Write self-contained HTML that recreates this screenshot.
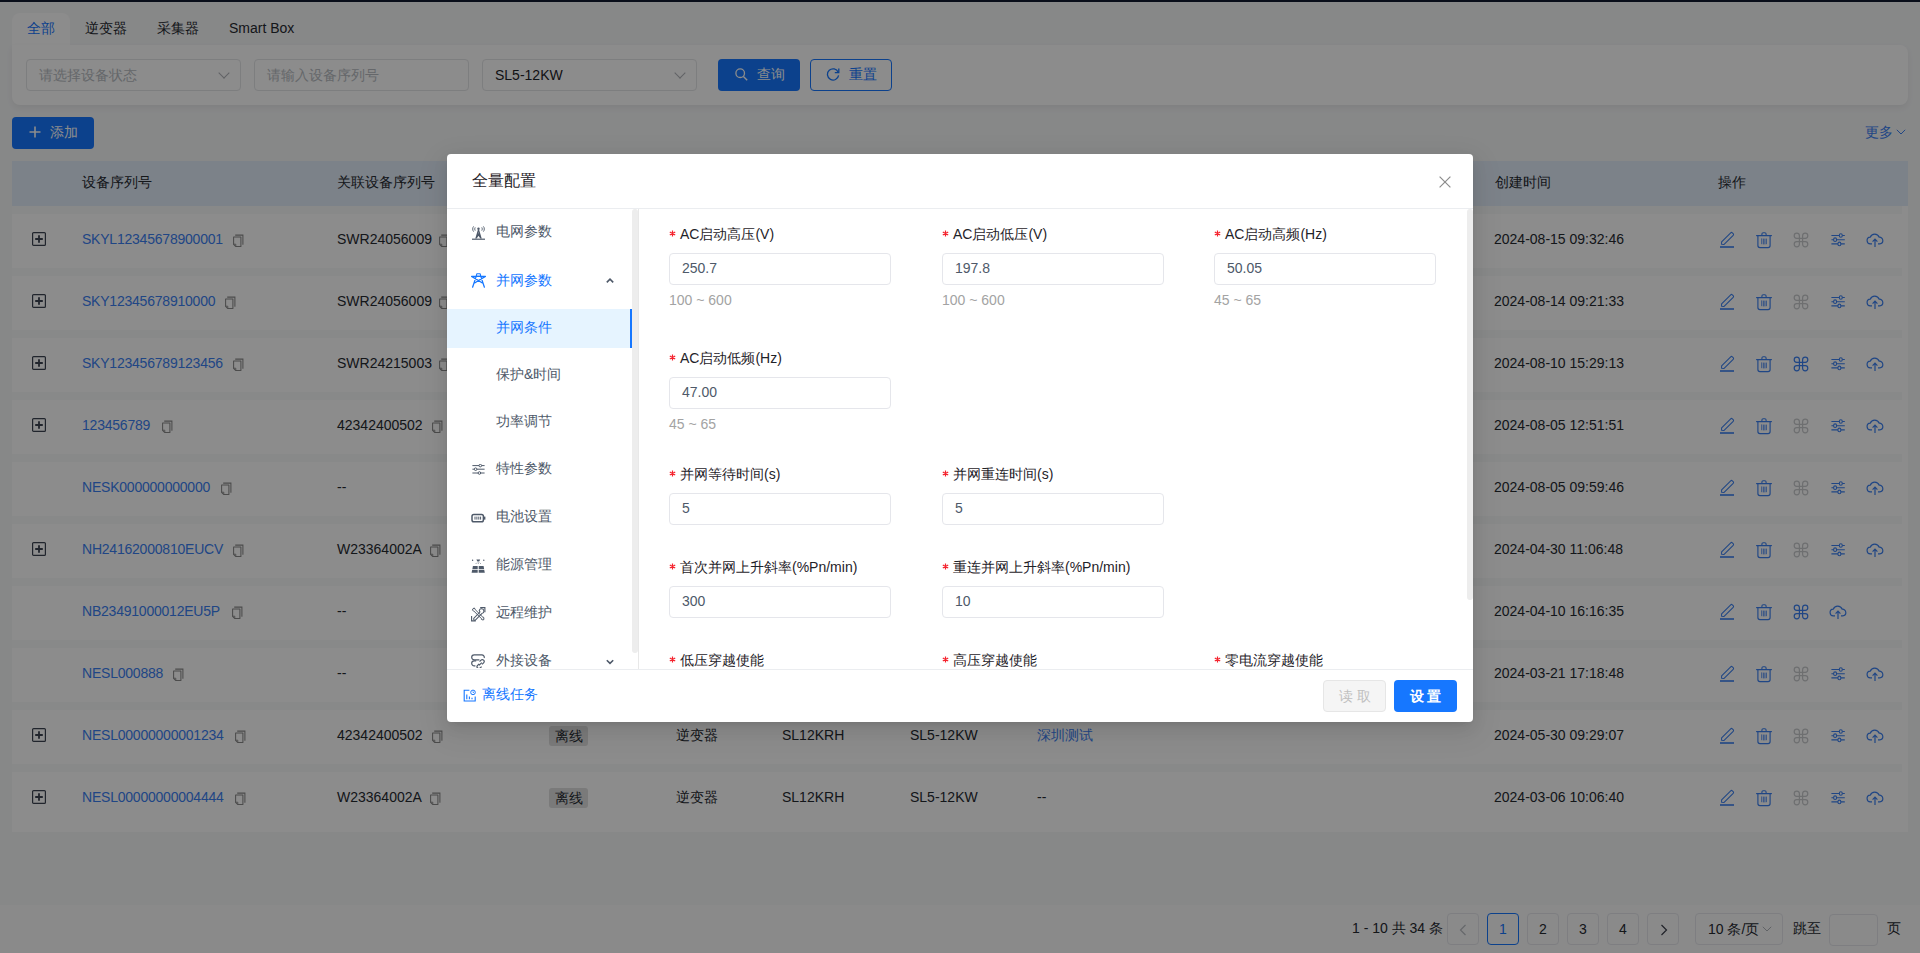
<!DOCTYPE html>
<html><head><meta charset="utf-8">
<style>
*{box-sizing:border-box;margin:0;padding:0}
html,body{width:1920px;height:953px;overflow:hidden}
body{position:relative;font-family:"Liberation Sans",sans-serif;font-size:14px;color:#262a31;background:#f6f7f8}
.a{position:absolute}
.t{position:absolute;white-space:nowrap;line-height:20px}
.topline{left:0;top:0;width:1920px;height:2px;background:#111a30}
.tabbar{left:12px;top:2px;width:1896px;height:43px;background:#eef0f3}
.tabact{left:12px;top:13px;width:58px;height:33px;background:#fff;border-radius:8px 8px 0 0}
.fcard{left:12px;top:45px;width:1896px;height:60px;background:#fff;border-radius:0 8px 8px 8px;box-shadow:0 3px 6px rgba(0,0,0,.06)}
.inp{position:absolute;top:59px;height:32px;width:215px;border:1px solid #e3e5e8;border-radius:4px;background:#fff}
.inp .ph{position:absolute;left:12px;top:5px;line-height:20px;color:#b8bcc2;white-space:nowrap}
.chev{position:absolute;width:8px;height:8px;border-right:1px solid #b0b3b8;border-bottom:1px solid #b0b3b8;transform:rotate(45deg)}
.btnp{position:absolute;background:#1677ff;color:#fff;border-radius:4px}
.thead{left:12px;top:161px;width:1896px;height:45px;background:#e2edfa}
.tbody{left:12px;top:206px;width:1896px;height:626px;background:#fff}
.gap{position:absolute;left:12px;width:1890px;height:8px;background:#f8f9fa}
.link{color:#1677ff}
.tl{color:#3b80f2}
.sn{letter-spacing:-0.22px}
.pbar{left:0;top:905px;width:1920px;height:48px;background:#fbfbfc}
.pg{position:absolute;top:913px;width:32px;height:32px;border:1px solid #e5e6eb;border-radius:4px;background:#fbfbfc;text-align:center;line-height:30px}
.cp{display:inline-block;vertical-align:top;margin-left:11px;margin-top:4px}
.tag{height:20px;width:39px;text-align:center;line-height:20px;background:#dfdfdf;border-radius:3px;color:#2a2e35}
.modal{left:447px;top:154px;width:1026px;height:568px;background:#fff;border-radius:4px;box-shadow:0 6px 16px rgba(0,0,0,.08),0 3px 6px -4px rgba(0,0,0,.12),0 9px 28px 8px rgba(0,0,0,.05)}
.mlab{color:#1f2329}
.req{color:#f53f3f;margin-right:4px;font-family:"Liberation Sans",sans-serif}
.minp{position:absolute;width:222px;height:32px;border:1px solid #e5e6eb;border-radius:4px;padding-left:12px;line-height:28px;color:#4e5969;font-size:14px}
.mhint{color:#a3a3a3}
.mask{left:0;top:0;width:1920px;height:953px;background:rgba(0,0,0,.45)}
</style></head><body>
<div class="a topline"></div>
<div class="a tabact"></div>
<div class="t link" style="left:27px;top:18px">全部</div>
<div class="t" style="left:85px;top:18px">逆变器</div>
<div class="t" style="left:157px;top:18px">采集器</div>
<div class="t" style="left:229px;top:18px">Smart Box</div>
<div class="a fcard"></div>
<div class="inp" style="left:26px"><span class="ph">请选择设备状态</span><i class="chev" style="left:193px;top:9px"></i></div>
<div class="inp" style="left:254px"><span class="ph">请输入设备序列号</span></div>
<div class="inp" style="left:482px"><span class="ph" style="color:#1f2329">SL5-12KW</span><i class="chev" style="left:193px;top:9px"></i></div>
<div class="btnp" style="left:718px;top:59px;width:82px;height:32px"></div>
<svg class="a" style="left:735px;top:68px" width="13" height="13" viewBox="0 0 13 13" fill="none"><circle cx="5.2" cy="5.2" r="4.3" stroke="#fff" stroke-width="1.3"/><path d="M8.4 8.4 12.2 12.2" stroke="#fff" stroke-width="1.4"/></svg>
<div class="t" style="left:757px;top:64px;color:#fff">查询</div>
<div class="a" style="left:810px;top:59px;width:82px;height:32px;border:1px solid #1677ff;border-radius:4px;background:#fff"></div>
<svg class="a" style="left:826px;top:67px" width="14" height="14" viewBox="0 0 14 14" fill="none"><path d="M12.2 5.2A5.6 5.6 0 1 0 12.6 8.4" stroke="#1677ff" stroke-width="1.3"/><path d="M12.8 1.6V5.6H8.8" stroke="#1677ff" stroke-width="1.3"/></svg>
<div class="t link" style="left:849px;top:64px">重置</div>
<div class="btnp" style="left:12px;top:117px;width:82px;height:32px"></div>
<svg class="a" style="left:29px;top:126px" width="12" height="12" viewBox="0 0 12 12" fill="none"><path d="M6 0.5V11.5M0.5 6H11.5" stroke="#fff" stroke-width="1.6"/></svg>
<div class="t" style="left:50px;top:122px;color:#fff">添加</div>
<div class="t tl" style="left:1865px;top:122px">更多</div>
<svg class="a" style="left:1896px;top:129px" width="10" height="6" viewBox="0 0 10 6" fill="none"><path d="M0.8 0.8 5 5 9.2 0.8" stroke="#3b80f2" stroke-width="1"/></svg>
<div class="a thead"></div>
<div class="a tbody"></div>
<div class="t" style="left:82px;top:172px">设备序列号</div>
<div class="t" style="left:337px;top:172px">关联设备序列号</div>
<div class="t" style="left:1495px;top:172px">创建时间</div>
<div class="t" style="left:1718px;top:172px">操作</div>
<div class="gap" style="top:206px"></div>
<div class="gap" style="top:268px"></div>
<div class="gap" style="top:330px"></div>
<div class="gap" style="top:392px"></div>
<div class="gap" style="top:454px"></div>
<div class="gap" style="top:516px"></div>
<div class="gap" style="top:578px"></div>
<div class="gap" style="top:640px"></div>
<div class="gap" style="top:702px"></div>
<div class="gap" style="top:764px"></div>
<svg class="a" style="left:32px;top:232px" width="14" height="14" viewBox="0 0 14 14" fill="none"><rect x="0.6" y="0.6" width="12.8" height="12.8" rx="1" stroke="#3d4452" stroke-width="1.2"/><path d="M7 3.2V10.8M3.2 7H10.8" stroke="#3d4452" stroke-width="1.8"/></svg>
<div class="t tl sn" style="left:82px;top:229px">SKYL12345678900001</div>
<svg class="a" style="left:233px;top:234px" width="12" height="13" viewBox="0 0 12 13" fill="none"><path d="M2.2 1.1H9.9V10.8" stroke="#8a8a8a" stroke-width="1.05"/><path d="M0.6 2.9H7.9V12.4H2.6L0.6 10.4Z" stroke="#8a8a8a" stroke-width="1.05" stroke-linejoin="round"/><path d="M0.8 10.2H2.8V12.2" stroke="#8a8a8a" stroke-width="0.9"/></svg>
<div class="t rel" style="left:337px;top:229px">SWR24056009</div>
<svg class="a" style="left:439px;top:234px" width="12" height="13" viewBox="0 0 12 13" fill="none"><path d="M2.2 1.1H9.9V10.8" stroke="#8a8a8a" stroke-width="1.05"/><path d="M0.6 2.9H7.9V12.4H2.6L0.6 10.4Z" stroke="#8a8a8a" stroke-width="1.05" stroke-linejoin="round"/><path d="M0.8 10.2H2.8V12.2" stroke="#8a8a8a" stroke-width="0.9"/></svg>
<div class="t" style="left:1494px;top:229px">2024-08-15 09:32:46</div>
<svg class="a" style="left:1717px;top:230px" width="20" height="20" viewBox="0 0 20 20" fill="none"><path d="M4.6 14.3V11.9L13.7 2.8Q14.5 2 15.3 2.8L16.2 3.7Q17 4.5 16.2 5.3L7.1 14.4Z" stroke="#3b80f2" stroke-width="1.05" stroke-linejoin="round"/><path d="M3 17H17" stroke="#3b80f2" stroke-width="1.6"/></svg>
<svg class="a" style="left:1754px;top:230px" width="20" height="20" viewBox="0 0 20 20" fill="none"><path d="M2.6 5.6H17.4" stroke="#3b80f2" stroke-width="1.3" stroke-linecap="round"/><path d="M7.9 5.3V4.1Q7.9 2.8 9.2 2.8H10.8Q12.1 2.8 12.1 4.1V5.3" stroke="#3b80f2" stroke-width="1.1"/><path d="M3.9 6V15.6Q3.9 17.6 5.9 17.6H14.1Q16.1 17.6 16.1 15.6V6" stroke="#3b80f2" stroke-width="1.15"/><path d="M7.7 8.4V14.2M9.4 8.6V14.4M10.9 8.6V14.4M12.4 8.6V14.2" stroke="#3b80f2" stroke-width="0.8"/></svg>
<svg class="a" style="left:1791px;top:230px" width="20" height="20" viewBox="0 0 20 20" fill="none"><path d="M8.4 8.4V5.7A2.6 2.6 0 1 0 5.7 8.4H14.3A2.6 2.6 0 1 0 11.6 5.7V14.3A2.6 2.6 0 1 0 14.3 11.6H5.7A2.6 2.6 0 1 0 8.4 14.3Z" stroke="#c8cacd" stroke-width="1.2"/></svg>
<svg class="a" style="left:1828px;top:230px" width="20" height="20" viewBox="0 0 20 20" fill="none"><path d="M3.4 5.5H16.8M3.4 9.7H16.8M3.4 13.9H16.8" stroke="#3b80f2" stroke-width="1.15"/><ellipse cx="12.8" cy="5.5" rx="1.5" ry="1.8" fill="#fff" stroke="#3b80f2" stroke-width="1.1"/><ellipse cx="7.1" cy="9.7" rx="1.5" ry="1.8" fill="#fff" stroke="#3b80f2" stroke-width="1.1"/><ellipse cx="11.4" cy="13.9" rx="1.5" ry="1.8" fill="#fff" stroke="#3b80f2" stroke-width="1.1"/></svg>
<svg class="a" style="left:1865px;top:230px" width="20" height="20" viewBox="0 0 20 20" fill="none"><path d="M7 13.8H5.6A3.3 3.3 0 0 1 5.2 7.2 4.8 4.8 0 0 1 14.2 7.2 3.3 3.3 0 0 1 14.8 13.8H13" stroke="#3b80f2" stroke-width="1.2"/><path d="M10 17V9.4M7.6 11.6 10 9.2 12.4 11.6" stroke="#3b80f2" stroke-width="1.2"/></svg>
<svg class="a" style="left:32px;top:294px" width="14" height="14" viewBox="0 0 14 14" fill="none"><rect x="0.6" y="0.6" width="12.8" height="12.8" rx="1" stroke="#3d4452" stroke-width="1.2"/><path d="M7 3.2V10.8M3.2 7H10.8" stroke="#3d4452" stroke-width="1.8"/></svg>
<div class="t tl sn" style="left:82px;top:291px">SKY12345678910000</div>
<svg class="a" style="left:225px;top:296px" width="12" height="13" viewBox="0 0 12 13" fill="none"><path d="M2.2 1.1H9.9V10.8" stroke="#8a8a8a" stroke-width="1.05"/><path d="M0.6 2.9H7.9V12.4H2.6L0.6 10.4Z" stroke="#8a8a8a" stroke-width="1.05" stroke-linejoin="round"/><path d="M0.8 10.2H2.8V12.2" stroke="#8a8a8a" stroke-width="0.9"/></svg>
<div class="t rel" style="left:337px;top:291px">SWR24056009</div>
<svg class="a" style="left:439px;top:296px" width="12" height="13" viewBox="0 0 12 13" fill="none"><path d="M2.2 1.1H9.9V10.8" stroke="#8a8a8a" stroke-width="1.05"/><path d="M0.6 2.9H7.9V12.4H2.6L0.6 10.4Z" stroke="#8a8a8a" stroke-width="1.05" stroke-linejoin="round"/><path d="M0.8 10.2H2.8V12.2" stroke="#8a8a8a" stroke-width="0.9"/></svg>
<div class="t" style="left:1494px;top:291px">2024-08-14 09:21:33</div>
<svg class="a" style="left:1717px;top:292px" width="20" height="20" viewBox="0 0 20 20" fill="none"><path d="M4.6 14.3V11.9L13.7 2.8Q14.5 2 15.3 2.8L16.2 3.7Q17 4.5 16.2 5.3L7.1 14.4Z" stroke="#3b80f2" stroke-width="1.05" stroke-linejoin="round"/><path d="M3 17H17" stroke="#3b80f2" stroke-width="1.6"/></svg>
<svg class="a" style="left:1754px;top:292px" width="20" height="20" viewBox="0 0 20 20" fill="none"><path d="M2.6 5.6H17.4" stroke="#3b80f2" stroke-width="1.3" stroke-linecap="round"/><path d="M7.9 5.3V4.1Q7.9 2.8 9.2 2.8H10.8Q12.1 2.8 12.1 4.1V5.3" stroke="#3b80f2" stroke-width="1.1"/><path d="M3.9 6V15.6Q3.9 17.6 5.9 17.6H14.1Q16.1 17.6 16.1 15.6V6" stroke="#3b80f2" stroke-width="1.15"/><path d="M7.7 8.4V14.2M9.4 8.6V14.4M10.9 8.6V14.4M12.4 8.6V14.2" stroke="#3b80f2" stroke-width="0.8"/></svg>
<svg class="a" style="left:1791px;top:292px" width="20" height="20" viewBox="0 0 20 20" fill="none"><path d="M8.4 8.4V5.7A2.6 2.6 0 1 0 5.7 8.4H14.3A2.6 2.6 0 1 0 11.6 5.7V14.3A2.6 2.6 0 1 0 14.3 11.6H5.7A2.6 2.6 0 1 0 8.4 14.3Z" stroke="#c8cacd" stroke-width="1.2"/></svg>
<svg class="a" style="left:1828px;top:292px" width="20" height="20" viewBox="0 0 20 20" fill="none"><path d="M3.4 5.5H16.8M3.4 9.7H16.8M3.4 13.9H16.8" stroke="#3b80f2" stroke-width="1.15"/><ellipse cx="12.8" cy="5.5" rx="1.5" ry="1.8" fill="#fff" stroke="#3b80f2" stroke-width="1.1"/><ellipse cx="7.1" cy="9.7" rx="1.5" ry="1.8" fill="#fff" stroke="#3b80f2" stroke-width="1.1"/><ellipse cx="11.4" cy="13.9" rx="1.5" ry="1.8" fill="#fff" stroke="#3b80f2" stroke-width="1.1"/></svg>
<svg class="a" style="left:1865px;top:292px" width="20" height="20" viewBox="0 0 20 20" fill="none"><path d="M7 13.8H5.6A3.3 3.3 0 0 1 5.2 7.2 4.8 4.8 0 0 1 14.2 7.2 3.3 3.3 0 0 1 14.8 13.8H13" stroke="#3b80f2" stroke-width="1.2"/><path d="M10 17V9.4M7.6 11.6 10 9.2 12.4 11.6" stroke="#3b80f2" stroke-width="1.2"/></svg>
<svg class="a" style="left:32px;top:356px" width="14" height="14" viewBox="0 0 14 14" fill="none"><rect x="0.6" y="0.6" width="12.8" height="12.8" rx="1" stroke="#3d4452" stroke-width="1.2"/><path d="M7 3.2V10.8M3.2 7H10.8" stroke="#3d4452" stroke-width="1.8"/></svg>
<div class="t tl sn" style="left:82px;top:353px">SKY123456789123456</div>
<svg class="a" style="left:233px;top:358px" width="12" height="13" viewBox="0 0 12 13" fill="none"><path d="M2.2 1.1H9.9V10.8" stroke="#8a8a8a" stroke-width="1.05"/><path d="M0.6 2.9H7.9V12.4H2.6L0.6 10.4Z" stroke="#8a8a8a" stroke-width="1.05" stroke-linejoin="round"/><path d="M0.8 10.2H2.8V12.2" stroke="#8a8a8a" stroke-width="0.9"/></svg>
<div class="t rel" style="left:337px;top:353px">SWR24215003</div>
<svg class="a" style="left:439px;top:358px" width="12" height="13" viewBox="0 0 12 13" fill="none"><path d="M2.2 1.1H9.9V10.8" stroke="#8a8a8a" stroke-width="1.05"/><path d="M0.6 2.9H7.9V12.4H2.6L0.6 10.4Z" stroke="#8a8a8a" stroke-width="1.05" stroke-linejoin="round"/><path d="M0.8 10.2H2.8V12.2" stroke="#8a8a8a" stroke-width="0.9"/></svg>
<div class="t" style="left:1494px;top:353px">2024-08-10 15:29:13</div>
<svg class="a" style="left:1717px;top:354px" width="20" height="20" viewBox="0 0 20 20" fill="none"><path d="M4.6 14.3V11.9L13.7 2.8Q14.5 2 15.3 2.8L16.2 3.7Q17 4.5 16.2 5.3L7.1 14.4Z" stroke="#3b80f2" stroke-width="1.05" stroke-linejoin="round"/><path d="M3 17H17" stroke="#3b80f2" stroke-width="1.6"/></svg>
<svg class="a" style="left:1754px;top:354px" width="20" height="20" viewBox="0 0 20 20" fill="none"><path d="M2.6 5.6H17.4" stroke="#3b80f2" stroke-width="1.3" stroke-linecap="round"/><path d="M7.9 5.3V4.1Q7.9 2.8 9.2 2.8H10.8Q12.1 2.8 12.1 4.1V5.3" stroke="#3b80f2" stroke-width="1.1"/><path d="M3.9 6V15.6Q3.9 17.6 5.9 17.6H14.1Q16.1 17.6 16.1 15.6V6" stroke="#3b80f2" stroke-width="1.15"/><path d="M7.7 8.4V14.2M9.4 8.6V14.4M10.9 8.6V14.4M12.4 8.6V14.2" stroke="#3b80f2" stroke-width="0.8"/></svg>
<svg class="a" style="left:1791px;top:354px" width="20" height="20" viewBox="0 0 20 20" fill="none"><path d="M8.4 8.4V5.7A2.6 2.6 0 1 0 5.7 8.4H14.3A2.6 2.6 0 1 0 11.6 5.7V14.3A2.6 2.6 0 1 0 14.3 11.6H5.7A2.6 2.6 0 1 0 8.4 14.3Z" stroke="#3b80f2" stroke-width="1.2"/></svg>
<svg class="a" style="left:1828px;top:354px" width="20" height="20" viewBox="0 0 20 20" fill="none"><path d="M3.4 5.5H16.8M3.4 9.7H16.8M3.4 13.9H16.8" stroke="#3b80f2" stroke-width="1.15"/><ellipse cx="12.8" cy="5.5" rx="1.5" ry="1.8" fill="#fff" stroke="#3b80f2" stroke-width="1.1"/><ellipse cx="7.1" cy="9.7" rx="1.5" ry="1.8" fill="#fff" stroke="#3b80f2" stroke-width="1.1"/><ellipse cx="11.4" cy="13.9" rx="1.5" ry="1.8" fill="#fff" stroke="#3b80f2" stroke-width="1.1"/></svg>
<svg class="a" style="left:1865px;top:354px" width="20" height="20" viewBox="0 0 20 20" fill="none"><path d="M7 13.8H5.6A3.3 3.3 0 0 1 5.2 7.2 4.8 4.8 0 0 1 14.2 7.2 3.3 3.3 0 0 1 14.8 13.8H13" stroke="#3b80f2" stroke-width="1.2"/><path d="M10 17V9.4M7.6 11.6 10 9.2 12.4 11.6" stroke="#3b80f2" stroke-width="1.2"/></svg>
<svg class="a" style="left:32px;top:418px" width="14" height="14" viewBox="0 0 14 14" fill="none"><rect x="0.6" y="0.6" width="12.8" height="12.8" rx="1" stroke="#3d4452" stroke-width="1.2"/><path d="M7 3.2V10.8M3.2 7H10.8" stroke="#3d4452" stroke-width="1.8"/></svg>
<div class="t tl sn" style="left:82px;top:415px">123456789</div>
<svg class="a" style="left:162px;top:420px" width="12" height="13" viewBox="0 0 12 13" fill="none"><path d="M2.2 1.1H9.9V10.8" stroke="#8a8a8a" stroke-width="1.05"/><path d="M0.6 2.9H7.9V12.4H2.6L0.6 10.4Z" stroke="#8a8a8a" stroke-width="1.05" stroke-linejoin="round"/><path d="M0.8 10.2H2.8V12.2" stroke="#8a8a8a" stroke-width="0.9"/></svg>
<div class="t rel" style="left:337px;top:415px">42342400502</div>
<svg class="a" style="left:432px;top:420px" width="12" height="13" viewBox="0 0 12 13" fill="none"><path d="M2.2 1.1H9.9V10.8" stroke="#8a8a8a" stroke-width="1.05"/><path d="M0.6 2.9H7.9V12.4H2.6L0.6 10.4Z" stroke="#8a8a8a" stroke-width="1.05" stroke-linejoin="round"/><path d="M0.8 10.2H2.8V12.2" stroke="#8a8a8a" stroke-width="0.9"/></svg>
<div class="t" style="left:1494px;top:415px">2024-08-05 12:51:51</div>
<svg class="a" style="left:1717px;top:416px" width="20" height="20" viewBox="0 0 20 20" fill="none"><path d="M4.6 14.3V11.9L13.7 2.8Q14.5 2 15.3 2.8L16.2 3.7Q17 4.5 16.2 5.3L7.1 14.4Z" stroke="#3b80f2" stroke-width="1.05" stroke-linejoin="round"/><path d="M3 17H17" stroke="#3b80f2" stroke-width="1.6"/></svg>
<svg class="a" style="left:1754px;top:416px" width="20" height="20" viewBox="0 0 20 20" fill="none"><path d="M2.6 5.6H17.4" stroke="#3b80f2" stroke-width="1.3" stroke-linecap="round"/><path d="M7.9 5.3V4.1Q7.9 2.8 9.2 2.8H10.8Q12.1 2.8 12.1 4.1V5.3" stroke="#3b80f2" stroke-width="1.1"/><path d="M3.9 6V15.6Q3.9 17.6 5.9 17.6H14.1Q16.1 17.6 16.1 15.6V6" stroke="#3b80f2" stroke-width="1.15"/><path d="M7.7 8.4V14.2M9.4 8.6V14.4M10.9 8.6V14.4M12.4 8.6V14.2" stroke="#3b80f2" stroke-width="0.8"/></svg>
<svg class="a" style="left:1791px;top:416px" width="20" height="20" viewBox="0 0 20 20" fill="none"><path d="M8.4 8.4V5.7A2.6 2.6 0 1 0 5.7 8.4H14.3A2.6 2.6 0 1 0 11.6 5.7V14.3A2.6 2.6 0 1 0 14.3 11.6H5.7A2.6 2.6 0 1 0 8.4 14.3Z" stroke="#c8cacd" stroke-width="1.2"/></svg>
<svg class="a" style="left:1828px;top:416px" width="20" height="20" viewBox="0 0 20 20" fill="none"><path d="M3.4 5.5H16.8M3.4 9.7H16.8M3.4 13.9H16.8" stroke="#3b80f2" stroke-width="1.15"/><ellipse cx="12.8" cy="5.5" rx="1.5" ry="1.8" fill="#fff" stroke="#3b80f2" stroke-width="1.1"/><ellipse cx="7.1" cy="9.7" rx="1.5" ry="1.8" fill="#fff" stroke="#3b80f2" stroke-width="1.1"/><ellipse cx="11.4" cy="13.9" rx="1.5" ry="1.8" fill="#fff" stroke="#3b80f2" stroke-width="1.1"/></svg>
<svg class="a" style="left:1865px;top:416px" width="20" height="20" viewBox="0 0 20 20" fill="none"><path d="M7 13.8H5.6A3.3 3.3 0 0 1 5.2 7.2 4.8 4.8 0 0 1 14.2 7.2 3.3 3.3 0 0 1 14.8 13.8H13" stroke="#3b80f2" stroke-width="1.2"/><path d="M10 17V9.4M7.6 11.6 10 9.2 12.4 11.6" stroke="#3b80f2" stroke-width="1.2"/></svg>
<div class="t tl sn" style="left:82px;top:477px">NESK000000000000</div>
<svg class="a" style="left:221px;top:482px" width="12" height="13" viewBox="0 0 12 13" fill="none"><path d="M2.2 1.1H9.9V10.8" stroke="#8a8a8a" stroke-width="1.05"/><path d="M0.6 2.9H7.9V12.4H2.6L0.6 10.4Z" stroke="#8a8a8a" stroke-width="1.05" stroke-linejoin="round"/><path d="M0.8 10.2H2.8V12.2" stroke="#8a8a8a" stroke-width="0.9"/></svg>
<div class="t rel" style="left:337px;top:477px">--</div>
<div class="t" style="left:1494px;top:477px">2024-08-05 09:59:46</div>
<svg class="a" style="left:1717px;top:478px" width="20" height="20" viewBox="0 0 20 20" fill="none"><path d="M4.6 14.3V11.9L13.7 2.8Q14.5 2 15.3 2.8L16.2 3.7Q17 4.5 16.2 5.3L7.1 14.4Z" stroke="#3b80f2" stroke-width="1.05" stroke-linejoin="round"/><path d="M3 17H17" stroke="#3b80f2" stroke-width="1.6"/></svg>
<svg class="a" style="left:1754px;top:478px" width="20" height="20" viewBox="0 0 20 20" fill="none"><path d="M2.6 5.6H17.4" stroke="#3b80f2" stroke-width="1.3" stroke-linecap="round"/><path d="M7.9 5.3V4.1Q7.9 2.8 9.2 2.8H10.8Q12.1 2.8 12.1 4.1V5.3" stroke="#3b80f2" stroke-width="1.1"/><path d="M3.9 6V15.6Q3.9 17.6 5.9 17.6H14.1Q16.1 17.6 16.1 15.6V6" stroke="#3b80f2" stroke-width="1.15"/><path d="M7.7 8.4V14.2M9.4 8.6V14.4M10.9 8.6V14.4M12.4 8.6V14.2" stroke="#3b80f2" stroke-width="0.8"/></svg>
<svg class="a" style="left:1791px;top:478px" width="20" height="20" viewBox="0 0 20 20" fill="none"><path d="M8.4 8.4V5.7A2.6 2.6 0 1 0 5.7 8.4H14.3A2.6 2.6 0 1 0 11.6 5.7V14.3A2.6 2.6 0 1 0 14.3 11.6H5.7A2.6 2.6 0 1 0 8.4 14.3Z" stroke="#c8cacd" stroke-width="1.2"/></svg>
<svg class="a" style="left:1828px;top:478px" width="20" height="20" viewBox="0 0 20 20" fill="none"><path d="M3.4 5.5H16.8M3.4 9.7H16.8M3.4 13.9H16.8" stroke="#3b80f2" stroke-width="1.15"/><ellipse cx="12.8" cy="5.5" rx="1.5" ry="1.8" fill="#fff" stroke="#3b80f2" stroke-width="1.1"/><ellipse cx="7.1" cy="9.7" rx="1.5" ry="1.8" fill="#fff" stroke="#3b80f2" stroke-width="1.1"/><ellipse cx="11.4" cy="13.9" rx="1.5" ry="1.8" fill="#fff" stroke="#3b80f2" stroke-width="1.1"/></svg>
<svg class="a" style="left:1865px;top:478px" width="20" height="20" viewBox="0 0 20 20" fill="none"><path d="M7 13.8H5.6A3.3 3.3 0 0 1 5.2 7.2 4.8 4.8 0 0 1 14.2 7.2 3.3 3.3 0 0 1 14.8 13.8H13" stroke="#3b80f2" stroke-width="1.2"/><path d="M10 17V9.4M7.6 11.6 10 9.2 12.4 11.6" stroke="#3b80f2" stroke-width="1.2"/></svg>
<svg class="a" style="left:32px;top:542px" width="14" height="14" viewBox="0 0 14 14" fill="none"><rect x="0.6" y="0.6" width="12.8" height="12.8" rx="1" stroke="#3d4452" stroke-width="1.2"/><path d="M7 3.2V10.8M3.2 7H10.8" stroke="#3d4452" stroke-width="1.8"/></svg>
<div class="t tl sn" style="left:82px;top:539px">NH24162000810EUCV</div>
<svg class="a" style="left:233px;top:544px" width="12" height="13" viewBox="0 0 12 13" fill="none"><path d="M2.2 1.1H9.9V10.8" stroke="#8a8a8a" stroke-width="1.05"/><path d="M0.6 2.9H7.9V12.4H2.6L0.6 10.4Z" stroke="#8a8a8a" stroke-width="1.05" stroke-linejoin="round"/><path d="M0.8 10.2H2.8V12.2" stroke="#8a8a8a" stroke-width="0.9"/></svg>
<div class="t rel" style="left:337px;top:539px">W23364002A</div>
<svg class="a" style="left:430px;top:544px" width="12" height="13" viewBox="0 0 12 13" fill="none"><path d="M2.2 1.1H9.9V10.8" stroke="#8a8a8a" stroke-width="1.05"/><path d="M0.6 2.9H7.9V12.4H2.6L0.6 10.4Z" stroke="#8a8a8a" stroke-width="1.05" stroke-linejoin="round"/><path d="M0.8 10.2H2.8V12.2" stroke="#8a8a8a" stroke-width="0.9"/></svg>
<div class="t" style="left:1494px;top:539px">2024-04-30 11:06:48</div>
<svg class="a" style="left:1717px;top:540px" width="20" height="20" viewBox="0 0 20 20" fill="none"><path d="M4.6 14.3V11.9L13.7 2.8Q14.5 2 15.3 2.8L16.2 3.7Q17 4.5 16.2 5.3L7.1 14.4Z" stroke="#3b80f2" stroke-width="1.05" stroke-linejoin="round"/><path d="M3 17H17" stroke="#3b80f2" stroke-width="1.6"/></svg>
<svg class="a" style="left:1754px;top:540px" width="20" height="20" viewBox="0 0 20 20" fill="none"><path d="M2.6 5.6H17.4" stroke="#3b80f2" stroke-width="1.3" stroke-linecap="round"/><path d="M7.9 5.3V4.1Q7.9 2.8 9.2 2.8H10.8Q12.1 2.8 12.1 4.1V5.3" stroke="#3b80f2" stroke-width="1.1"/><path d="M3.9 6V15.6Q3.9 17.6 5.9 17.6H14.1Q16.1 17.6 16.1 15.6V6" stroke="#3b80f2" stroke-width="1.15"/><path d="M7.7 8.4V14.2M9.4 8.6V14.4M10.9 8.6V14.4M12.4 8.6V14.2" stroke="#3b80f2" stroke-width="0.8"/></svg>
<svg class="a" style="left:1791px;top:540px" width="20" height="20" viewBox="0 0 20 20" fill="none"><path d="M8.4 8.4V5.7A2.6 2.6 0 1 0 5.7 8.4H14.3A2.6 2.6 0 1 0 11.6 5.7V14.3A2.6 2.6 0 1 0 14.3 11.6H5.7A2.6 2.6 0 1 0 8.4 14.3Z" stroke="#c8cacd" stroke-width="1.2"/></svg>
<svg class="a" style="left:1828px;top:540px" width="20" height="20" viewBox="0 0 20 20" fill="none"><path d="M3.4 5.5H16.8M3.4 9.7H16.8M3.4 13.9H16.8" stroke="#3b80f2" stroke-width="1.15"/><ellipse cx="12.8" cy="5.5" rx="1.5" ry="1.8" fill="#fff" stroke="#3b80f2" stroke-width="1.1"/><ellipse cx="7.1" cy="9.7" rx="1.5" ry="1.8" fill="#fff" stroke="#3b80f2" stroke-width="1.1"/><ellipse cx="11.4" cy="13.9" rx="1.5" ry="1.8" fill="#fff" stroke="#3b80f2" stroke-width="1.1"/></svg>
<svg class="a" style="left:1865px;top:540px" width="20" height="20" viewBox="0 0 20 20" fill="none"><path d="M7 13.8H5.6A3.3 3.3 0 0 1 5.2 7.2 4.8 4.8 0 0 1 14.2 7.2 3.3 3.3 0 0 1 14.8 13.8H13" stroke="#3b80f2" stroke-width="1.2"/><path d="M10 17V9.4M7.6 11.6 10 9.2 12.4 11.6" stroke="#3b80f2" stroke-width="1.2"/></svg>
<div class="t tl sn" style="left:82px;top:601px">NB23491000012EU5P</div>
<svg class="a" style="left:232px;top:606px" width="12" height="13" viewBox="0 0 12 13" fill="none"><path d="M2.2 1.1H9.9V10.8" stroke="#8a8a8a" stroke-width="1.05"/><path d="M0.6 2.9H7.9V12.4H2.6L0.6 10.4Z" stroke="#8a8a8a" stroke-width="1.05" stroke-linejoin="round"/><path d="M0.8 10.2H2.8V12.2" stroke="#8a8a8a" stroke-width="0.9"/></svg>
<div class="t rel" style="left:337px;top:601px">--</div>
<div class="t" style="left:1494px;top:601px">2024-04-10 16:16:35</div>
<svg class="a" style="left:1717px;top:602px" width="20" height="20" viewBox="0 0 20 20" fill="none"><path d="M4.6 14.3V11.9L13.7 2.8Q14.5 2 15.3 2.8L16.2 3.7Q17 4.5 16.2 5.3L7.1 14.4Z" stroke="#3b80f2" stroke-width="1.05" stroke-linejoin="round"/><path d="M3 17H17" stroke="#3b80f2" stroke-width="1.6"/></svg>
<svg class="a" style="left:1754px;top:602px" width="20" height="20" viewBox="0 0 20 20" fill="none"><path d="M2.6 5.6H17.4" stroke="#3b80f2" stroke-width="1.3" stroke-linecap="round"/><path d="M7.9 5.3V4.1Q7.9 2.8 9.2 2.8H10.8Q12.1 2.8 12.1 4.1V5.3" stroke="#3b80f2" stroke-width="1.1"/><path d="M3.9 6V15.6Q3.9 17.6 5.9 17.6H14.1Q16.1 17.6 16.1 15.6V6" stroke="#3b80f2" stroke-width="1.15"/><path d="M7.7 8.4V14.2M9.4 8.6V14.4M10.9 8.6V14.4M12.4 8.6V14.2" stroke="#3b80f2" stroke-width="0.8"/></svg>
<svg class="a" style="left:1791px;top:602px" width="20" height="20" viewBox="0 0 20 20" fill="none"><path d="M8.4 8.4V5.7A2.6 2.6 0 1 0 5.7 8.4H14.3A2.6 2.6 0 1 0 11.6 5.7V14.3A2.6 2.6 0 1 0 14.3 11.6H5.7A2.6 2.6 0 1 0 8.4 14.3Z" stroke="#3b80f2" stroke-width="1.2"/></svg>
<svg class="a" style="left:1828px;top:602px" width="20" height="20" viewBox="0 0 20 20" fill="none"><path d="M7 13.8H5.6A3.3 3.3 0 0 1 5.2 7.2 4.8 4.8 0 0 1 14.2 7.2 3.3 3.3 0 0 1 14.8 13.8H13" stroke="#3b80f2" stroke-width="1.2"/><path d="M10 17V9.4M7.6 11.6 10 9.2 12.4 11.6" stroke="#3b80f2" stroke-width="1.2"/></svg>
<div class="t tl sn" style="left:82px;top:663px">NESL000888</div>
<svg class="a" style="left:173px;top:668px" width="12" height="13" viewBox="0 0 12 13" fill="none"><path d="M2.2 1.1H9.9V10.8" stroke="#8a8a8a" stroke-width="1.05"/><path d="M0.6 2.9H7.9V12.4H2.6L0.6 10.4Z" stroke="#8a8a8a" stroke-width="1.05" stroke-linejoin="round"/><path d="M0.8 10.2H2.8V12.2" stroke="#8a8a8a" stroke-width="0.9"/></svg>
<div class="t rel" style="left:337px;top:663px">--</div>
<div class="t" style="left:1494px;top:663px">2024-03-21 17:18:48</div>
<svg class="a" style="left:1717px;top:664px" width="20" height="20" viewBox="0 0 20 20" fill="none"><path d="M4.6 14.3V11.9L13.7 2.8Q14.5 2 15.3 2.8L16.2 3.7Q17 4.5 16.2 5.3L7.1 14.4Z" stroke="#3b80f2" stroke-width="1.05" stroke-linejoin="round"/><path d="M3 17H17" stroke="#3b80f2" stroke-width="1.6"/></svg>
<svg class="a" style="left:1754px;top:664px" width="20" height="20" viewBox="0 0 20 20" fill="none"><path d="M2.6 5.6H17.4" stroke="#3b80f2" stroke-width="1.3" stroke-linecap="round"/><path d="M7.9 5.3V4.1Q7.9 2.8 9.2 2.8H10.8Q12.1 2.8 12.1 4.1V5.3" stroke="#3b80f2" stroke-width="1.1"/><path d="M3.9 6V15.6Q3.9 17.6 5.9 17.6H14.1Q16.1 17.6 16.1 15.6V6" stroke="#3b80f2" stroke-width="1.15"/><path d="M7.7 8.4V14.2M9.4 8.6V14.4M10.9 8.6V14.4M12.4 8.6V14.2" stroke="#3b80f2" stroke-width="0.8"/></svg>
<svg class="a" style="left:1791px;top:664px" width="20" height="20" viewBox="0 0 20 20" fill="none"><path d="M8.4 8.4V5.7A2.6 2.6 0 1 0 5.7 8.4H14.3A2.6 2.6 0 1 0 11.6 5.7V14.3A2.6 2.6 0 1 0 14.3 11.6H5.7A2.6 2.6 0 1 0 8.4 14.3Z" stroke="#c8cacd" stroke-width="1.2"/></svg>
<svg class="a" style="left:1828px;top:664px" width="20" height="20" viewBox="0 0 20 20" fill="none"><path d="M3.4 5.5H16.8M3.4 9.7H16.8M3.4 13.9H16.8" stroke="#3b80f2" stroke-width="1.15"/><ellipse cx="12.8" cy="5.5" rx="1.5" ry="1.8" fill="#fff" stroke="#3b80f2" stroke-width="1.1"/><ellipse cx="7.1" cy="9.7" rx="1.5" ry="1.8" fill="#fff" stroke="#3b80f2" stroke-width="1.1"/><ellipse cx="11.4" cy="13.9" rx="1.5" ry="1.8" fill="#fff" stroke="#3b80f2" stroke-width="1.1"/></svg>
<svg class="a" style="left:1865px;top:664px" width="20" height="20" viewBox="0 0 20 20" fill="none"><path d="M7 13.8H5.6A3.3 3.3 0 0 1 5.2 7.2 4.8 4.8 0 0 1 14.2 7.2 3.3 3.3 0 0 1 14.8 13.8H13" stroke="#3b80f2" stroke-width="1.2"/><path d="M10 17V9.4M7.6 11.6 10 9.2 12.4 11.6" stroke="#3b80f2" stroke-width="1.2"/></svg>
<svg class="a" style="left:32px;top:728px" width="14" height="14" viewBox="0 0 14 14" fill="none"><rect x="0.6" y="0.6" width="12.8" height="12.8" rx="1" stroke="#3d4452" stroke-width="1.2"/><path d="M7 3.2V10.8M3.2 7H10.8" stroke="#3d4452" stroke-width="1.8"/></svg>
<div class="t tl sn" style="left:82px;top:725px">NESL00000000001234</div>
<svg class="a" style="left:235px;top:730px" width="12" height="13" viewBox="0 0 12 13" fill="none"><path d="M2.2 1.1H9.9V10.8" stroke="#8a8a8a" stroke-width="1.05"/><path d="M0.6 2.9H7.9V12.4H2.6L0.6 10.4Z" stroke="#8a8a8a" stroke-width="1.05" stroke-linejoin="round"/><path d="M0.8 10.2H2.8V12.2" stroke="#8a8a8a" stroke-width="0.9"/></svg>
<div class="t rel" style="left:337px;top:725px">42342400502</div>
<svg class="a" style="left:432px;top:730px" width="12" height="13" viewBox="0 0 12 13" fill="none"><path d="M2.2 1.1H9.9V10.8" stroke="#8a8a8a" stroke-width="1.05"/><path d="M0.6 2.9H7.9V12.4H2.6L0.6 10.4Z" stroke="#8a8a8a" stroke-width="1.05" stroke-linejoin="round"/><path d="M0.8 10.2H2.8V12.2" stroke="#8a8a8a" stroke-width="0.9"/></svg>
<div class="a tag" style="left:549px;top:726px">离线</div>
<div class="t" style="left:676px;top:725px">逆变器</div>
<div class="t" style="left:782px;top:725px">SL12KRH</div>
<div class="t" style="left:910px;top:725px">SL5-12KW</div>
<div class="t tl" style="left:1037px;top:725px">深圳测试</div>
<div class="t" style="left:1494px;top:725px">2024-05-30 09:29:07</div>
<svg class="a" style="left:1717px;top:726px" width="20" height="20" viewBox="0 0 20 20" fill="none"><path d="M4.6 14.3V11.9L13.7 2.8Q14.5 2 15.3 2.8L16.2 3.7Q17 4.5 16.2 5.3L7.1 14.4Z" stroke="#3b80f2" stroke-width="1.05" stroke-linejoin="round"/><path d="M3 17H17" stroke="#3b80f2" stroke-width="1.6"/></svg>
<svg class="a" style="left:1754px;top:726px" width="20" height="20" viewBox="0 0 20 20" fill="none"><path d="M2.6 5.6H17.4" stroke="#3b80f2" stroke-width="1.3" stroke-linecap="round"/><path d="M7.9 5.3V4.1Q7.9 2.8 9.2 2.8H10.8Q12.1 2.8 12.1 4.1V5.3" stroke="#3b80f2" stroke-width="1.1"/><path d="M3.9 6V15.6Q3.9 17.6 5.9 17.6H14.1Q16.1 17.6 16.1 15.6V6" stroke="#3b80f2" stroke-width="1.15"/><path d="M7.7 8.4V14.2M9.4 8.6V14.4M10.9 8.6V14.4M12.4 8.6V14.2" stroke="#3b80f2" stroke-width="0.8"/></svg>
<svg class="a" style="left:1791px;top:726px" width="20" height="20" viewBox="0 0 20 20" fill="none"><path d="M8.4 8.4V5.7A2.6 2.6 0 1 0 5.7 8.4H14.3A2.6 2.6 0 1 0 11.6 5.7V14.3A2.6 2.6 0 1 0 14.3 11.6H5.7A2.6 2.6 0 1 0 8.4 14.3Z" stroke="#c8cacd" stroke-width="1.2"/></svg>
<svg class="a" style="left:1828px;top:726px" width="20" height="20" viewBox="0 0 20 20" fill="none"><path d="M3.4 5.5H16.8M3.4 9.7H16.8M3.4 13.9H16.8" stroke="#3b80f2" stroke-width="1.15"/><ellipse cx="12.8" cy="5.5" rx="1.5" ry="1.8" fill="#fff" stroke="#3b80f2" stroke-width="1.1"/><ellipse cx="7.1" cy="9.7" rx="1.5" ry="1.8" fill="#fff" stroke="#3b80f2" stroke-width="1.1"/><ellipse cx="11.4" cy="13.9" rx="1.5" ry="1.8" fill="#fff" stroke="#3b80f2" stroke-width="1.1"/></svg>
<svg class="a" style="left:1865px;top:726px" width="20" height="20" viewBox="0 0 20 20" fill="none"><path d="M7 13.8H5.6A3.3 3.3 0 0 1 5.2 7.2 4.8 4.8 0 0 1 14.2 7.2 3.3 3.3 0 0 1 14.8 13.8H13" stroke="#3b80f2" stroke-width="1.2"/><path d="M10 17V9.4M7.6 11.6 10 9.2 12.4 11.6" stroke="#3b80f2" stroke-width="1.2"/></svg>
<svg class="a" style="left:32px;top:790px" width="14" height="14" viewBox="0 0 14 14" fill="none"><rect x="0.6" y="0.6" width="12.8" height="12.8" rx="1" stroke="#3d4452" stroke-width="1.2"/><path d="M7 3.2V10.8M3.2 7H10.8" stroke="#3d4452" stroke-width="1.8"/></svg>
<div class="t tl sn" style="left:82px;top:787px">NESL00000000004444</div>
<svg class="a" style="left:235px;top:792px" width="12" height="13" viewBox="0 0 12 13" fill="none"><path d="M2.2 1.1H9.9V10.8" stroke="#8a8a8a" stroke-width="1.05"/><path d="M0.6 2.9H7.9V12.4H2.6L0.6 10.4Z" stroke="#8a8a8a" stroke-width="1.05" stroke-linejoin="round"/><path d="M0.8 10.2H2.8V12.2" stroke="#8a8a8a" stroke-width="0.9"/></svg>
<div class="t rel" style="left:337px;top:787px">W23364002A</div>
<svg class="a" style="left:430px;top:792px" width="12" height="13" viewBox="0 0 12 13" fill="none"><path d="M2.2 1.1H9.9V10.8" stroke="#8a8a8a" stroke-width="1.05"/><path d="M0.6 2.9H7.9V12.4H2.6L0.6 10.4Z" stroke="#8a8a8a" stroke-width="1.05" stroke-linejoin="round"/><path d="M0.8 10.2H2.8V12.2" stroke="#8a8a8a" stroke-width="0.9"/></svg>
<div class="a tag" style="left:549px;top:788px">离线</div>
<div class="t" style="left:676px;top:787px">逆变器</div>
<div class="t" style="left:782px;top:787px">SL12KRH</div>
<div class="t" style="left:910px;top:787px">SL5-12KW</div>
<div class="t" style="left:1037px;top:787px">--</div>
<div class="t" style="left:1494px;top:787px">2024-03-06 10:06:40</div>
<svg class="a" style="left:1717px;top:788px" width="20" height="20" viewBox="0 0 20 20" fill="none"><path d="M4.6 14.3V11.9L13.7 2.8Q14.5 2 15.3 2.8L16.2 3.7Q17 4.5 16.2 5.3L7.1 14.4Z" stroke="#3b80f2" stroke-width="1.05" stroke-linejoin="round"/><path d="M3 17H17" stroke="#3b80f2" stroke-width="1.6"/></svg>
<svg class="a" style="left:1754px;top:788px" width="20" height="20" viewBox="0 0 20 20" fill="none"><path d="M2.6 5.6H17.4" stroke="#3b80f2" stroke-width="1.3" stroke-linecap="round"/><path d="M7.9 5.3V4.1Q7.9 2.8 9.2 2.8H10.8Q12.1 2.8 12.1 4.1V5.3" stroke="#3b80f2" stroke-width="1.1"/><path d="M3.9 6V15.6Q3.9 17.6 5.9 17.6H14.1Q16.1 17.6 16.1 15.6V6" stroke="#3b80f2" stroke-width="1.15"/><path d="M7.7 8.4V14.2M9.4 8.6V14.4M10.9 8.6V14.4M12.4 8.6V14.2" stroke="#3b80f2" stroke-width="0.8"/></svg>
<svg class="a" style="left:1791px;top:788px" width="20" height="20" viewBox="0 0 20 20" fill="none"><path d="M8.4 8.4V5.7A2.6 2.6 0 1 0 5.7 8.4H14.3A2.6 2.6 0 1 0 11.6 5.7V14.3A2.6 2.6 0 1 0 14.3 11.6H5.7A2.6 2.6 0 1 0 8.4 14.3Z" stroke="#c8cacd" stroke-width="1.2"/></svg>
<svg class="a" style="left:1828px;top:788px" width="20" height="20" viewBox="0 0 20 20" fill="none"><path d="M3.4 5.5H16.8M3.4 9.7H16.8M3.4 13.9H16.8" stroke="#3b80f2" stroke-width="1.15"/><ellipse cx="12.8" cy="5.5" rx="1.5" ry="1.8" fill="#fff" stroke="#3b80f2" stroke-width="1.1"/><ellipse cx="7.1" cy="9.7" rx="1.5" ry="1.8" fill="#fff" stroke="#3b80f2" stroke-width="1.1"/><ellipse cx="11.4" cy="13.9" rx="1.5" ry="1.8" fill="#fff" stroke="#3b80f2" stroke-width="1.1"/></svg>
<svg class="a" style="left:1865px;top:788px" width="20" height="20" viewBox="0 0 20 20" fill="none"><path d="M7 13.8H5.6A3.3 3.3 0 0 1 5.2 7.2 4.8 4.8 0 0 1 14.2 7.2 3.3 3.3 0 0 1 14.8 13.8H13" stroke="#3b80f2" stroke-width="1.2"/><path d="M10 17V9.4M7.6 11.6 10 9.2 12.4 11.6" stroke="#3b80f2" stroke-width="1.2"/></svg>
<div class="a pbar"></div>
<div class="t" style="left:1352px;top:918px">1 - 10 共 34 条</div>
<div class="pg" style="left:1447px"><svg class="a" style="left:11px;top:10px" width="8" height="12" viewBox="0 0 8 12" fill="none"><path d="M6.5 1 1.5 6 6.5 11" stroke="#b9bcc1" stroke-width="1.2"/></svg></div>
<div class="pg" style="left:1487px;border-color:#1677ff;color:#1677ff">1</div>
<div class="pg" style="left:1527px">2</div>
<div class="pg" style="left:1567px">3</div>
<div class="pg" style="left:1607px">4</div>
<div class="pg" style="left:1647px"><svg class="a" style="left:12px;top:10px" width="8" height="12" viewBox="0 0 8 12" fill="none"><path d="M1.5 1 6.5 6 1.5 11" stroke="#3a3f4a" stroke-width="1.2"/></svg></div>
<div class="pg" style="left:1695px;width:88px;text-align:left;padding-left:12px">10 条/页<svg class="a" style="left:66px;top:12px" width="10" height="6" viewBox="0 0 10 6" fill="none"><path d="M0.8 0.8 5 5 9.2 0.8" stroke="#b0b3b8" stroke-width="1"/></svg></div>
<div class="t" style="left:1793px;top:918px">跳至</div>
<div class="pg" style="left:1829px;top:914px;width:49px"></div>
<div class="t" style="left:1887px;top:918px">页</div>
<div class="a mask"></div>
<div class="a modal"></div>
<div class="t" style="left:472px;top:170px;font-size:16px;line-height:22px;color:#1f2329">全量配置</div>
<svg class="a" style="left:1439px;top:176px" width="12" height="12" viewBox="0 0 12 12" fill="none"><path d="M0.6 0.6 11.4 11.4M11.4 0.6 0.6 11.4" stroke="#8c8c8c" stroke-width="1.2"/></svg>
<div class="a" style="left:447px;top:208px;width:1026px;height:1px;background:#ebedf0"></div>
<div class="a" style="left:447px;top:309px;width:183px;height:39px;background:#e6f4ff"></div>
<div class="a" style="left:630px;top:309px;width:2px;height:39px;background:#1677ff"></div>
<div class="a" style="left:632px;top:209px;width:6px;height:444px;background:#ededed;border-radius:3px"></div>
<div class="a" style="left:638px;top:209px;width:1px;height:460px;background:#e8e8e8"></div>
<div class="a" style="left:1467px;top:209px;width:6px;height:391px;background:#ededed;border-radius:3px"></div>
<div class="t" style="left:496px;top:221px;color:#4e5969">电网参数</div>
<svg class="a" style="left:471px;top:225px" width="15" height="15" viewBox="0 0 15 15" fill="none"><path d="M2.6 1.4C1.4 2.8 1.4 5.2 2.6 6.6M4.2 2.4C3.6 3.3 3.6 4.7 4.2 5.6M12.4 1.4C13.6 2.8 13.6 5.2 12.4 6.6M10.8 2.4C11.4 3.3 11.4 4.7 10.8 5.6" stroke="#4e5969" stroke-width="0.9"/><circle cx="7.5" cy="3.8" r="1.2" fill="#4e5969"/><path d="M7.5 4.6 4.8 13.6M7.5 4.6 10.2 13.6M6.2 8h2.6M5.6 10.4h3.8M6.2 8 9.6 13M8.8 8 5.4 13" stroke="#4e5969" stroke-width="1.1"/><path d="M1 14.2h13" stroke="#4e5969" stroke-width="1.2"/></svg>
<div class="t" style="left:496px;top:270px;color:#1677ff">并网参数</div>
<svg class="a" style="left:471px;top:273px" width="15" height="15" viewBox="0 0 15 15" fill="none"><path d="M5.8 0.8H9.2L9.8 3.4H5.2Z" stroke="#1677ff" stroke-width="1.1" stroke-linejoin="round"/><path d="M0.6 3.4H14.4M0.6 3.4 11 9.8M14.4 3.4 4 9.8M5.2 3.4 1.6 14.2M9.8 3.4 13.4 14.2" stroke="#1677ff" stroke-width="1.25" stroke-linejoin="round" stroke-linecap="round"/></svg>
<div class="t" style="left:496px;top:317px;color:#1677ff">并网条件</div>
<div class="t" style="left:496px;top:364px;color:#4e5969">保护&时间</div>
<div class="t" style="left:496px;top:411px;color:#4e5969">功率调节</div>
<div class="t" style="left:496px;top:458px;color:#4e5969">特性参数</div>
<svg class="a" style="left:472px;top:464px" width="13" height="11" viewBox="0 0 13 11" fill="none"><path d="M0.4 1.6h12.2M0.4 5.2h12.2M0.4 9h12.2" stroke="#4e5969" stroke-width="1"/><circle cx="8.3" cy="1.6" r="1.3" fill="#fff" stroke="#4e5969" stroke-width="1"/><circle cx="3.6" cy="5.2" r="1.3" fill="#fff" stroke="#4e5969" stroke-width="1"/><circle cx="7.4" cy="9" r="1.3" fill="#fff" stroke="#4e5969" stroke-width="1"/></svg>
<div class="t" style="left:496px;top:506px;color:#4e5969">电池设置</div>
<svg class="a" style="left:471px;top:513px" width="15" height="10" viewBox="0 0 15 10" fill="none"><rect x="1" y="1.4" width="11.4" height="7.4" rx="1.8" stroke="#4e5969" stroke-width="1.5"/><path d="M13.6 3.6v3" stroke="#4e5969" stroke-width="1.6"/><path d="M4 3.6v3M5.9 3.6v3M7.8 3.6v3M9.6 3.6v3" stroke="#4e5969" stroke-width="1"/></svg>
<div class="t" style="left:496px;top:554px;color:#4e5969">能源管理</div>
<svg class="a" style="left:471px;top:559px" width="15" height="14" viewBox="0 0 15 14" fill="none"><circle cx="1.6" cy="1.2" r=".7" fill="#4e5969"/><circle cx="12.8" cy="1.2" r=".7" fill="#4e5969"/><path d="M5.4 0.6H9.2L8.2 2.4H6.4Z" fill="#4e5969"/><path d="M5 4.6 5.8 3.8M9.6 4.6 8.8 3.8M7.3 3.6V4.6" stroke="#4e5969" stroke-width="0.9"/><path d="M1.9 7H6.7V10H1.4ZM7.7 7H12.6L13.1 10H7.7ZM1.2 10.8H6.7V13.8H0.6ZM7.7 10.8H13.2L13.8 13.8H7.7Z" fill="#4e5969"/></svg>
<div class="t" style="left:496px;top:602px;color:#4e5969">远程维护</div>
<svg class="a" style="left:471px;top:607px" width="15" height="15" viewBox="0 0 15 15" fill="none"><path d="M9.2 0.6H13.9V5.2M0.6 9V13.9H4.8" stroke="#4e5969" stroke-width="1.1"/><path d="M2 1.6 3.4 1 4.2 2.6 12 10.4 12.6 10.2 13 12.4 12 13 10.4 12.4 10.6 11.8 2.8 4 1.4 3.2Z" stroke="#4e5969" stroke-width="1" stroke-linejoin="round"/><path d="M8.2 3.6a2.4 2.4 0 1 1 2.6 3L4.6 12.8a1.1 1.1 0 0 1-1.6-1.6L9 5Z" stroke="#4e5969" stroke-width="1.05" stroke-linejoin="round"/></svg>
<div class="t" style="left:496px;top:650px;color:#4e5969">外接设备</div>
<svg class="a" style="left:471px;top:654px" width="15" height="14" viewBox="0 0 15 14" fill="none"><path d="M8.4 5.8H3.2a2.5 2.5 0 0 1 0-5H10.8a2.5 2.5 0 0 1 2.4 3.2" stroke="#4e5969" stroke-width="1.2"/><path d="M5.2 6.8H3.2a2.5 2.5 0 0 0 0 5H4.4" stroke="#4e5969" stroke-width="1.2"/><path d="M8.6 7.6 10 6.2a1.8 1.8 0 0 1 2.6 2.6L11 10.4M8.2 9.8 6.6 11.4a1.8 1.8 0 0 0 2.6 2.6L10.6 12.6M8 11.4 10.8 8.6" stroke="#4e5969" stroke-width="1.2"/></svg>
<svg class="a" style="left:606px;top:278px" width="8" height="6" viewBox="0 0 8 6" fill="none"><path d="M0.8 4.4 4 1.2 7.2 4.4" stroke="#4e5969" stroke-width="1.6"/></svg>
<svg class="a" style="left:606px;top:659px" width="8" height="6" viewBox="0 0 8 6" fill="none"><path d="M0.8 1.2 4 4.4 7.2 1.2" stroke="#4e5969" stroke-width="1.6"/></svg>
<div class="t mlab" style="left:680px;top:224px">AC启动高压(V)</div><svg class="a" style="left:669px;top:230px" width="7" height="7" viewBox="0 0 7 7" fill="none"><path d="M3.5 0.4V6.6M0.8 1.9 6.2 5.1M0.8 5.1 6.2 1.9" stroke="#f5222d" stroke-width="1.2"/></svg><div class="minp" style="left:669px;top:253px">250.7</div><div class="t mhint" style="left:669px;top:290px">100 ~ 600</div>
<div class="t mlab" style="left:953px;top:224px">AC启动低压(V)</div><svg class="a" style="left:942px;top:230px" width="7" height="7" viewBox="0 0 7 7" fill="none"><path d="M3.5 0.4V6.6M0.8 1.9 6.2 5.1M0.8 5.1 6.2 1.9" stroke="#f5222d" stroke-width="1.2"/></svg><div class="minp" style="left:942px;top:253px">197.8</div><div class="t mhint" style="left:942px;top:290px">100 ~ 600</div>
<div class="t mlab" style="left:1225px;top:224px">AC启动高频(Hz)</div><svg class="a" style="left:1214px;top:230px" width="7" height="7" viewBox="0 0 7 7" fill="none"><path d="M3.5 0.4V6.6M0.8 1.9 6.2 5.1M0.8 5.1 6.2 1.9" stroke="#f5222d" stroke-width="1.2"/></svg><div class="minp" style="left:1214px;top:253px">50.05</div><div class="t mhint" style="left:1214px;top:290px">45 ~ 65</div>
<div class="t mlab" style="left:680px;top:348px">AC启动低频(Hz)</div><svg class="a" style="left:669px;top:354px" width="7" height="7" viewBox="0 0 7 7" fill="none"><path d="M3.5 0.4V6.6M0.8 1.9 6.2 5.1M0.8 5.1 6.2 1.9" stroke="#f5222d" stroke-width="1.2"/></svg><div class="minp" style="left:669px;top:377px">47.00</div><div class="t mhint" style="left:669px;top:414px">45 ~ 65</div>
<div class="t mlab" style="left:680px;top:464px">并网等待时间(s)</div><svg class="a" style="left:669px;top:470px" width="7" height="7" viewBox="0 0 7 7" fill="none"><path d="M3.5 0.4V6.6M0.8 1.9 6.2 5.1M0.8 5.1 6.2 1.9" stroke="#f5222d" stroke-width="1.2"/></svg><div class="minp" style="left:669px;top:493px">5</div>
<div class="t mlab" style="left:953px;top:464px">并网重连时间(s)</div><svg class="a" style="left:942px;top:470px" width="7" height="7" viewBox="0 0 7 7" fill="none"><path d="M3.5 0.4V6.6M0.8 1.9 6.2 5.1M0.8 5.1 6.2 1.9" stroke="#f5222d" stroke-width="1.2"/></svg><div class="minp" style="left:942px;top:493px">5</div>
<div class="t mlab" style="left:680px;top:557px">首次并网上升斜率(%Pn/min)</div><svg class="a" style="left:669px;top:563px" width="7" height="7" viewBox="0 0 7 7" fill="none"><path d="M3.5 0.4V6.6M0.8 1.9 6.2 5.1M0.8 5.1 6.2 1.9" stroke="#f5222d" stroke-width="1.2"/></svg><div class="minp" style="left:669px;top:586px">300</div>
<div class="t mlab" style="left:953px;top:557px">重连并网上升斜率(%Pn/min)</div><svg class="a" style="left:942px;top:563px" width="7" height="7" viewBox="0 0 7 7" fill="none"><path d="M3.5 0.4V6.6M0.8 1.9 6.2 5.1M0.8 5.1 6.2 1.9" stroke="#f5222d" stroke-width="1.2"/></svg><div class="minp" style="left:942px;top:586px">10</div>
<div class="a" style="left:639px;top:640px;width:828px;height:29px;overflow:hidden"><div class="t mlab" style="left:41px;top:10px">低压穿越使能</div><div class="t mlab" style="left:314px;top:10px">高压穿越使能</div><div class="t mlab" style="left:586px;top:10px">零电流穿越使能</div><svg class="a" style="left:30px;top:16px" width="7" height="7" viewBox="0 0 7 7" fill="none"><path d="M3.5 0.4V6.6M0.8 1.9 6.2 5.1M0.8 5.1 6.2 1.9" stroke="#f5222d" stroke-width="1.2"/></svg><svg class="a" style="left:303px;top:16px" width="7" height="7" viewBox="0 0 7 7" fill="none"><path d="M3.5 0.4V6.6M0.8 1.9 6.2 5.1M0.8 5.1 6.2 1.9" stroke="#f5222d" stroke-width="1.2"/></svg><svg class="a" style="left:575px;top:16px" width="7" height="7" viewBox="0 0 7 7" fill="none"><path d="M3.5 0.4V6.6M0.8 1.9 6.2 5.1M0.8 5.1 6.2 1.9" stroke="#f5222d" stroke-width="1.2"/></svg></div>
<div class="a" style="left:447px;top:669px;width:1026px;height:1px;background:#ebedf0"></div>
<svg class="a" style="left:463px;top:689px" width="14" height="13" viewBox="0 0 14 13" fill="none"><path d="M6.4 1.2H1.2V12H12.2V7.4" stroke="#1677ff" stroke-width="1.1"/><circle cx="10" cy="3.4" r="2.3" stroke="#1677ff" stroke-width="1"/><path d="M10 2.4v1.1h.9" stroke="#1677ff" stroke-width=".8"/><path d="M3.8 5.6v4.6M6.4 7.6v2.6M9 8.8v1.4" stroke="#1677ff" stroke-width="1.1"/></svg>
<div class="t" style="left:482px;top:684px;color:#1677ff">离线任务</div>
<div class="a" style="left:1323px;top:680px;width:63px;height:32px;background:#f5f5f5;border:1px solid #e6e6e6;border-radius:4px;color:#bfbfbf;text-align:center;line-height:30px;letter-spacing:4px;text-indent:4px">读取</div>
<div class="a" style="left:1394px;top:680px;width:63px;height:32px;background:#1677ff;border-radius:4px;color:#fff;text-align:center;line-height:32px;font-weight:bold;letter-spacing:3px;text-indent:3px">设置</div>
</body></html>
